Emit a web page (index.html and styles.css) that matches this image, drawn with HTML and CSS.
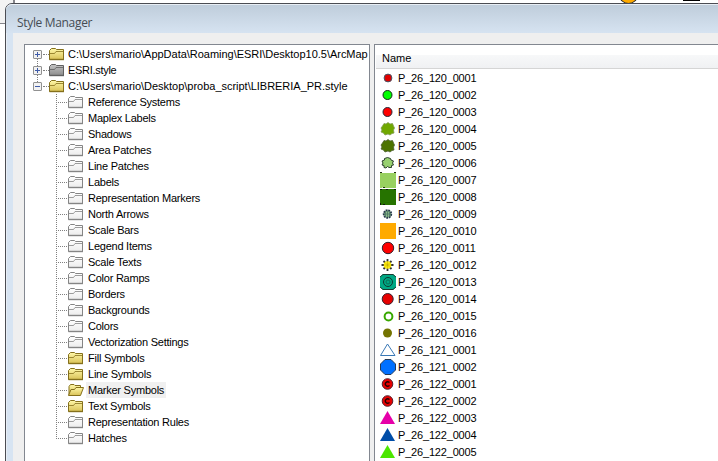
FILE: index.html
```html
<!DOCTYPE html>
<html lang="en">
<head>
<meta charset="utf-8">
<title>Style Manager</title>
<link rel="stylesheet" href="styles.css">
</head>
<body>
<svg width="0" height="0" class="defs">
  <defs>
    <linearGradient id="gy" x2="0" y2="1"><stop offset="0" stop-color="#fff8a8"/><stop offset="1" stop-color="#d9c258"/></linearGradient>
    <linearGradient id="gg" x2="0" y2="1"><stop offset="0" stop-color="#c4c4c4"/><stop offset="1" stop-color="#8c8c8c"/></linearGradient>
    <linearGradient id="gw" x2="0" y2="1"><stop offset="0" stop-color="#fff"/><stop offset="1" stop-color="#ececec"/></linearGradient>
    <symbol id="folder" viewBox="0 0 16 14">
      <path d="M.5 12.500V3.500L2.500 1.500H6.500L7.500 2.500H14.500V12.500Z"/>
      <path d="M1 6.500H5.500L7 4.500H14.500" fill="none" stroke-width=".8"/>
      <path d="M.5 12.500H15" fill="none" stroke-width="1.400"/>
    </symbol>
    <symbol id="open" viewBox="0 0 16 14">
      <path d="M1 12V3.500L2.500 1.500H6L7 2.500H12.500V5"/>
      <path d="M.5 12.500L3 6.500H6.500L8 4.500H15.500L12.500 12.500Z"/>
    </symbol>
    <symbol id="bush" viewBox="0 0 16 16">
      <path d="M4 2.500L6 3L8 1.500L10 3L12.500 2.500L13.500 5L14.500 7L13.500 9L14 12L12 12.500L10 14L8 13L5 14L3.500 12L1 11L2 9L1 7L2.500 5Z"/>
    </symbol>
  </defs>
</svg>
<div class="backdrop"><i class="corner"></i><i class="dot"></i><i class="bar"></i></div>
<main class="window">
  <header class="titlebar">Style Manager</header>
  <div class="content">
    <section class="tree">
      <div class="root plus"><b></b><svg class="f y"><use href="#folder"/></svg><span class="path1">C:\Users\mario\AppData\Roaming\ESRI\Desktop10.5\ArcMap</span></div>
      <div class="root plus mid"><b></b><svg class="f g"><use href="#folder"/></svg><span class="esri">ESRI.style</span></div>
      <div class="root last"><b></b><svg class="f y"><use href="#folder"/></svg><span class="path2">C:\Users\mario\Desktop\proba_script\LIBRERIA_PR.style</span></div>
      <ul>
        <li><svg class="f"><use href="#folder"/></svg><span>Reference Systems</span></li>
        <li><svg class="f"><use href="#folder"/></svg><span>Maplex Labels</span></li>
        <li><svg class="f"><use href="#folder"/></svg><span>Shadows</span></li>
        <li><svg class="f"><use href="#folder"/></svg><span>Area Patches</span></li>
        <li><svg class="f"><use href="#folder"/></svg><span>Line Patches</span></li>
        <li><svg class="f"><use href="#folder"/></svg><span>Labels</span></li>
        <li><svg class="f"><use href="#folder"/></svg><span>Representation Markers</span></li>
        <li><svg class="f"><use href="#folder"/></svg><span>North Arrows</span></li>
        <li><svg class="f"><use href="#folder"/></svg><span>Scale Bars</span></li>
        <li><svg class="f"><use href="#folder"/></svg><span>Legend Items</span></li>
        <li><svg class="f"><use href="#folder"/></svg><span>Scale Texts</span></li>
        <li><svg class="f"><use href="#folder"/></svg><span>Color Ramps</span></li>
        <li><svg class="f"><use href="#folder"/></svg><span>Borders</span></li>
        <li><svg class="f"><use href="#folder"/></svg><span>Backgrounds</span></li>
        <li><svg class="f"><use href="#folder"/></svg><span>Colors</span></li>
        <li><svg class="f"><use href="#folder"/></svg><span>Vectorization Settings</span></li>
        <li><svg class="f y"><use href="#folder"/></svg><span>Fill Symbols</span></li>
        <li><svg class="f y"><use href="#folder"/></svg><span>Line Symbols</span></li>
        <li><svg class="f y"><use href="#open"/></svg><span class="selected">Marker Symbols</span></li>
        <li><svg class="f y"><use href="#folder"/></svg><span>Text Symbols</span></li>
        <li><svg class="f"><use href="#folder"/></svg><span>Representation Rules</span></li>
        <li><svg class="f"><use href="#folder"/></svg><span>Hatches</span></li>
      </ul>
    </section>
    <section class="list">
      <div class="head">Name</div>
      <ol>
        <li><svg><circle cx="8" cy="8" r="3.900" fill="#e00000" stroke="#456"/></svg>P_26_120_0001</li>
        <li><svg><circle cx="7.500" cy="8" r="4.500" fill="#0f0" stroke="#142814"/></svg>P_26_120_0002</li>
        <li><svg><circle cx="7.500" cy="8" r="4.500" fill="red" stroke="#202838"/></svg>P_26_120_0003</li>
        <li><svg><use href="#bush" fill="#70a800" stroke="#7f9a50" stroke-width=".8"/></svg>P_26_120_0004</li>
        <li><svg><use href="#bush" fill="#4c7300" stroke="#4d5f30" stroke-width=".8"/></svg>P_26_120_0005</li>
        <li><svg><path d="M4.500 3.500L7.500 2.500L10.500 3.500L11 5L13.500 6L12.500 8L13.500 10L11.500 10.500V12.500H9L7.500 11.500L6 13L4 12.500V10.500L2 10L3 8L2 6L4.500 5Z" fill="#98d070" stroke="#1c3020" stroke-width=".9"/></svg>P_26_120_0006</li>
        <li><svg><path d="M0 1H15L16 0V16H4L3 15L2 16H0Z" fill="#98d060"/><path d="M0 0H2V1H0ZM14 0H16V1H14ZM3 15H5V16H3Z" fill="#243018"/></svg>P_26_120_0007</li>
        <li><svg><path d="M0 0H16V16H0Z" fill="#267300"/><path d="M0 0H2V1H0ZM6 0H8V1H6ZM14 0H16V1H14ZM0 14H1V16H0ZM3 15H5V16H3Z" fill="#101810"/></svg>P_26_120_0008</li>
        <li><svg><circle cx="7.500" cy="8" r="3.800" fill="#8cbd88" stroke="#28384c" stroke-width="1.800" stroke-dasharray="1.800 .8"/><path d="M4 8H11M7.500 5V11M5.500 5V11M9.500 5V11" stroke="#4d7468" stroke-width=".8"/></svg>P_26_120_0009</li>
        <li><svg><path d="M0 0H16V16H0Z" fill="#ffaa00"/></svg>P_26_120_0010</li>
        <li><svg><circle cx="8" cy="8" r="5.700" fill="red" stroke="#38202c"/></svg>P_26_120_0011</li>
        <li><svg><path d="M7.500 2V14M1.500 8H13.500M3.500 4L11.500 12M11.500 4L3.500 12" stroke="#333" stroke-width="1.800"/><circle cx="7.500" cy="8" r="3.800" fill="#ffee10"/><path d="M7.500 4V12M4 8H11M5 5.500L10 10.500M10 5.500L5 10.500" stroke="#b8a000" stroke-width=".5"/></svg>P_26_120_0012</li>
        <li><svg><path d="M3 0H13L16 3V13L13 16H3L0 13V3Z" fill="#00a884"/><path d="M0 3L3 .5H13L16 3M0 13L3 15.500H13L16 13" fill="none" stroke="#173d32"/><circle cx="8" cy="8" r="4.500" fill="none" stroke="#103830"/><circle cx="8" cy="8" r="2" fill="#00a884" stroke="#087058"/></svg>P_26_120_0013</li>
        <li><svg><circle cx="7.700" cy="8" r="5.500" fill="#e60000" stroke="#38202c"/></svg>P_26_120_0014</li>
        <li><svg><circle cx="8.500" cy="8.500" r="3.900" fill="#fff" stroke="#38a800" stroke-width="2"/></svg>P_26_120_0015</li>
        <li><svg><circle cx="7.500" cy="8" r="4.500" fill="#737300"/></svg>P_26_120_0016</li>
        <li><svg><path d="M.5 13.500L7.500 2L15 13.500Z" fill="#fff" stroke="#3978b5"/></svg>P_26_121_0001</li>
        <li><svg><path d="M5 .5H11L15.500 5V11L11 15.500H5L.5 11V5Z" fill="#0070ff" stroke="#243a58"/></svg>P_26_121_0002</li>
        <li><svg><circle cx="7.500" cy="8" r="5.300" fill="#e60000" stroke="#58202c"/><path d="M9.500 6.500Q7.500 5 6 6.500T6 9.500Q7.500 11 9.500 9.500" fill="none" stroke="#200" stroke-width="1.300"/></svg>P_26_122_0001</li>
        <li><svg><circle cx="7.500" cy="8" r="5.300" fill="#e60000" stroke="#58202c"/><path d="M9.500 6.500Q7.500 5 6 6.500T6 9.500Q7.500 11 9.500 9.500" fill="none" stroke="#200" stroke-width="1.300"/></svg>P_26_122_0002</li>
        <li><svg><path d="M0 14L7.500 1L15 14Z" fill="#e600a9"/></svg>P_26_122_0003</li>
        <li><svg><path d="M0 14L7.500 1L15 14Z" fill="#004da8"/></svg>P_26_122_0004</li>
        <li><svg><path d="M0 14L7.500 1L15 14Z" fill="#4ce600"/></svg>P_26_122_0005</li>
      </ol>
    </section>
  </div>
</main>
</body>
</html>
```

FILE: styles.css
```css
* { box-sizing: border-box; }
body { margin: 0; width: 718px; height: 461px; overflow: hidden; background: #fff; color: #000; font: 11px/16px "Liberation Sans", sans-serif; }
ul, ol { list-style: none; margin: 0; padding: 0; }
.defs { position: absolute; }
.backdrop { position: absolute; inset: 0; z-index: -1; }
.corner { position: absolute; left: 0; top: 0; width: 15px; height: 24px; background: #f3f3f3; border: solid #85858b; border-width: 0 2px 1px 0; }
.dot { position: absolute; left: 619px; top: -14px; width: 19px; height: 18px; border-radius: 50%; background: #ffaa00; border: 1px solid #222; }
.bar { position: absolute; left: 683px; top: 0; width: 17px; height: 1px; background: #000; }
.window { margin: 3px 0 0 5px; width: 720px; height: 470px; display: flex; flex-direction: column; background: #d7e4f2; border: 1px solid #4b4d53; border-radius: 7px 0 0 0; box-shadow: inset 1px 1px #e8eef5; }
.titlebar { height: 29px; flex: none; padding: 4px 0 0 11px; font: 12px/28px "Open Sans", "Noto Sans", sans-serif; letter-spacing: -.33px; color: #454c54; background: linear-gradient(#bfcddb, #d6e3f1); border-top: 1px solid #e8eef5; border-radius: 6px 0 0 0; }
.content { flex: 1; margin-left: 7px; padding: 11px 0 0 11px; display: flex; gap: 4px; background: #efefef; }
.tree { width: 346px; border: 1px solid #828790; background: #fff; padding: 1px 1px 0 8px; overflow: hidden; white-space: nowrap; }
.root { height: 16px; display: flex; align-items: center; position: relative; }
.root b { width: 9px; height: 9px; flex: none; border: 1px solid #919191; border-radius: 1px; background: linear-gradient(#3f5ba8, #3f5ba8) center / 5px 1px no-repeat, #f2f2f2; }
.plus b { background: linear-gradient(#3f5ba8, #3f5ba8) center / 5px 1px no-repeat, linear-gradient(#3f5ba8, #3f5ba8) center / 1px 5px no-repeat, #f2f2f2; }
.root::before { content: ""; width: 6px; border-top: 1px dotted #808080; order: 0; margin-left: 1px; }
.root b { order: -1; }
.plus::after { content: ""; position: absolute; left: 4px; top: 13px; height: 7px; border-left: 1px dotted #808080; }
.root span { margin-left: 3px; letter-spacing: -.02px; }
.root span, .root svg { order: 1; }
.path1 { overflow: hidden; }
.root .esri { letter-spacing: -.3px; }
.f { width: 16px; height: 14px; flex: none; fill: url(#gw); stroke: #858585; }
.f.y { fill: url(#gy); stroke: #85701c; }
.f.g { fill: url(#gg); stroke: #606060; }
.tree ul { margin-left: 23px; position: relative; }
.tree ul::before { content: ""; position: absolute; left: 0; top: 0; height: 345px; border-left: 1px dotted #808080; }
.tree li { height: 16px; display: flex; align-items: center; }
.tree li::before { content: ""; width: 9px; border-top: 1px dotted #808080; margin: 0 1px 0 2px; }
.tree li span { margin-left: 2px; padding: 0 2px; height: 16px; letter-spacing: -.24px; }
.selected { background: #f0f0f0; }
.list { flex: 1; border: 1px solid #828790; background: #fff; padding: 1px 0 0 1px; }
.head { height: 23px; padding: 4px 0 0 6px; line-height: 17px; background: linear-gradient(#fff 0 9px, #f7f8f9 9px, #f0f1f3); border-bottom: 1px solid #d5d5d5; }
.list ol { padding: 0 0 0 4px; }
.list li { height: 17px; display: flex; align-items: center; gap: 2px; letter-spacing: -.18px; }
.list svg { width: 16px; height: 16px; flex: none; }
```
